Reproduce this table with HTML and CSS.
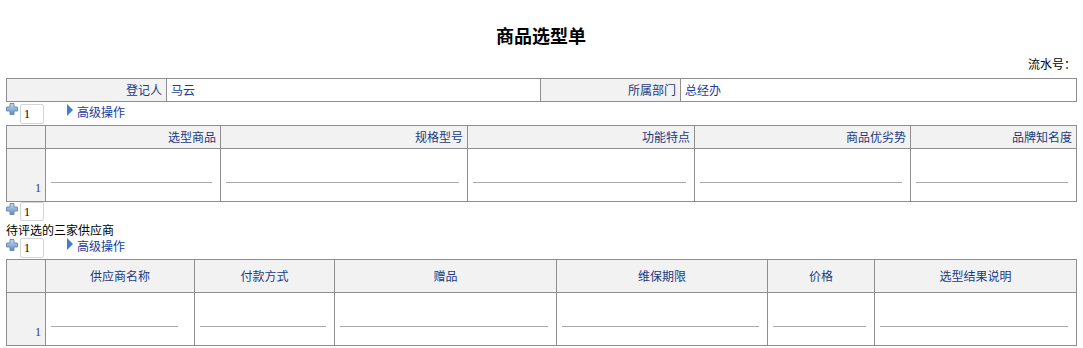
FILE: index.html
```html
<!DOCTYPE html>
<html lang="zh">
<head>
<meta charset="utf-8">
<title>商品选型单</title>
<link rel="stylesheet" href="styles.css">
</head>
<body>
<div class="page">
  <div class="title">商品选型单</div>
  <div class="serial">流水号：</div>

  <table class="grid info">
    <colgroup><col class="w160"><col class="w374"><col class="w140"><col class="w396"></colgroup>
    <tr>
      <td class="label">登记人</td>
      <td class="value">马云</td>
      <td class="label">所属部门</td>
      <td class="value">总经办</td>
    </tr>
  </table>

  <div class="toolbar tb1">
    <svg class="plus" width="12" height="12" viewBox="0 0 12 12"><defs><linearGradient id="pg1" x1="0" y1="0" x2="0" y2="1"><stop offset="0" stop-color="#c9dcef"/><stop offset="1" stop-color="#5f8bbd"/></linearGradient></defs><path d="M4 0.5h4v3.5h3.5v4H8v3.5H4V8H0.5V4H4z" fill="url(#pg1)" stroke="#6c8fb8" stroke-width="1"/></svg>
    <span class="count">1</span>
    <span class="adv"><span class="tri"></span>高级操作</span>
  </div>

  <table class="grid detail d1">
    <colgroup><col class="w39"><col class="w175"><col class="w247"><col class="w227"><col class="w216"><col class="w166"></colgroup>
    <tr class="head">
      <th class="num"></th>
      <th>选型商品</th>
      <th>规格型号</th>
      <th>功能特点</th>
      <th>商品优劣势</th>
      <th>品牌知名度</th>
    </tr>
    <tr class="body">
      <td class="num">1</td>
      <td><div class="field"></div></td>
      <td><div class="field"></div></td>
      <td><div class="field"></div></td>
      <td><div class="field"></div></td>
      <td><div class="field"></div></td>
    </tr>
  </table>

  <div class="toolbar tb2">
    <svg class="plus" width="12" height="12" viewBox="0 0 12 12"><defs><linearGradient id="pg2" x1="0" y1="0" x2="0" y2="1"><stop offset="0" stop-color="#c9dcef"/><stop offset="1" stop-color="#5f8bbd"/></linearGradient></defs><path d="M4 0.5h4v3.5h3.5v4H8v3.5H4V8H0.5V4H4z" fill="url(#pg2)" stroke="#6c8fb8" stroke-width="1"/></svg>
    <span class="count">1</span>
  </div>

  <div class="section">待评选的三家供应商</div>

  <div class="toolbar tb3">
    <svg class="plus" width="12" height="12" viewBox="0 0 12 12"><defs><linearGradient id="pg3" x1="0" y1="0" x2="0" y2="1"><stop offset="0" stop-color="#c9dcef"/><stop offset="1" stop-color="#5f8bbd"/></linearGradient></defs><path d="M4 0.5h4v3.5h3.5v4H8v3.5H4V8H0.5V4H4z" fill="url(#pg3)" stroke="#6c8fb8" stroke-width="1"/></svg>
    <span class="count">1</span>
    <span class="adv"><span class="tri"></span>高级操作</span>
  </div>

  <table class="grid detail d2">
    <colgroup><col class="w39"><col class="w149"><col class="w140"><col class="w222"><col class="w211"><col class="w107"><col class="w202"></colgroup>
    <tr class="head">
      <th class="num"></th>
      <th>供应商名称</th>
      <th>付款方式</th>
      <th>赠品</th>
      <th>维保期限</th>
      <th>价格</th>
      <th>选型结果说明</th>
    </tr>
    <tr class="body">
      <td class="num">1</td>
      <td><div class="field f-narrow"></div></td>
      <td><div class="field"></div></td>
      <td><div class="field"></div></td>
      <td><div class="field"></div></td>
      <td><div class="field"></div></td>
      <td><div class="field"></div></td>
    </tr>
  </table>
</div>
</body>
</html>
```

FILE: styles.css
```css
html, body {
  margin: 0;
  padding: 0;
  background: #ffffff;
}

body {
  font-family: "Noto Sans CJK SC", "Liberation Sans", sans-serif;
  font-size: 12px;
  color: #000;
}

.page {
  padding: 0 7px 0 6px;
}

.title {
  padding-top: 24px;
  height: 26px;
  line-height: 22px;
  font-size: 18px;
  font-weight: bold;
  text-align: center;
  color: #000;
}

.serial {
  height: 22px;
  padding-top: 6px;
  line-height: 16px;
  text-align: right;
  padding-right: 0;
  font-size: 12px;
}

.grid {
  border-collapse: collapse;
  table-layout: fixed;
  width: 1071px;
}

.grid td, .grid th {
  border: 1px solid #8e8e8e;
  padding: 0;
  font-weight: normal;
  color: #1b3a82;
  font-size: 12px;
  line-height: 16px;
}

.w39 { width: 39px; }
.w107 { width: 107px; }
.w140 { width: 140px; }
.w149 { width: 149px; }
.w160 { width: 160px; }
.w166 { width: 166px; }
.w175 { width: 175px; }
.w202 { width: 202px; }
.w211 { width: 211px; }
.w216 { width: 216px; }
.w222 { width: 222px; }
.w227 { width: 227px; }
.w247 { width: 247px; }
.w374 { width: 374px; }
.w396 { width: 396px; }

.info td {
  height: 22px;
}

.info .label {
  background: #f2f2f2;
  text-align: right;
  padding-right: 4px;
}

.info .value {
  padding-left: 4px;
  color: #1d3d9a;
}

.toolbar {
  display: flex;
  align-items: flex-start;
  padding-left: 0;
}

.tb1 { height: 23px; }
.tb2 { height: 20px; }
.tb3 { height: 21px; }

.plus {
  display: block;
  margin-top: 1px;
  flex: none;
}

.count {
  display: block;
  box-sizing: border-box;
  width: 24px;
  height: 20px;
  margin-left: 2px;
  margin-top: 2px;
  border: 1px solid #d4d4d4;
  border-radius: 2px;
  background: #fff;
  font-family: "Liberation Serif", serif;
  font-size: 12px;
  line-height: 18px;
  padding-left: 3px;
  color: #000;
}

.tb2 .count {
  margin-top: 0;
  height: 19px;
}

.tb3 .count {
  margin-top: 0;
}

.adv {
  display: flex;
  align-items: center;
  margin-left: 23px;
  margin-top: 2px;
  height: 16px;
  color: #1a3a9c;
  font-size: 12px;
  line-height: 16px;
}

.tb3 .adv {
  margin-top: 0;
}

.tri {
  display: block;
  width: 0;
  height: 0;
  border-top: 6px solid transparent;
  border-bottom: 6px solid transparent;
  border-left: 6px solid #3d7fd0;
  margin-right: 4px;
  margin-top: -4px;
}

.detail .num {
  background: #f2f2f2;
}

.detail .head th {
  background: #f2f2f2;
}

.d1 .head th {
  height: 22px;
  text-align: right;
  padding-right: 4px;
}

.d2 .head th {
  height: 32px;
  text-align: center;
}

.detail .body td {
  height: 52px;
  vertical-align: top;
}

.detail .body td.num {
  vertical-align: bottom;
  text-align: right;
  padding-right: 4px;
  padding-bottom: 6px;
  font-family: "Liberation Serif", serif;
  font-size: 12px;
  line-height: 14px;
  height: 32px;
}

.field {
  box-sizing: border-box;
  height: 34px;
  margin-left: 5px;
  width: calc(100% - 13px);
  border-bottom: 1px solid #a9a9a9;
}

.field.f-narrow {
  width: calc(100% - 21px);
}

.section {
  height: 16px;
  line-height: 16px;
  padding-top: 0;
  font-size: 12px;
  color: #000;
}
```
